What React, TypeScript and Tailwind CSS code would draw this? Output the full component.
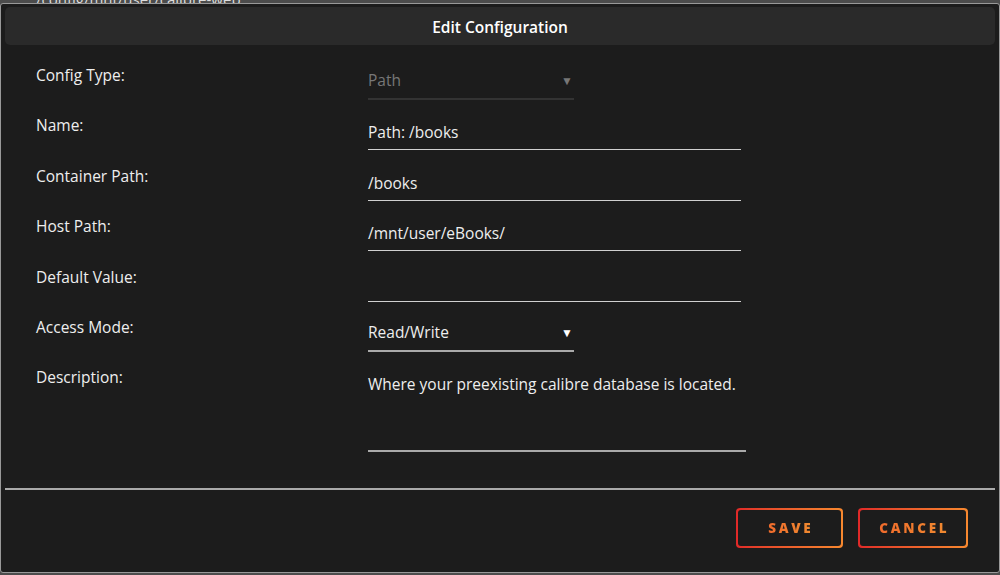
import React from 'react';

const FONT = { fontFamily: '"Open Sans", "Noto Sans", sans-serif' };

type Row = {
  label: string;
  kind: 'select' | 'text' | 'area';
  value: string;
  muted?: boolean;
};

const ROWS: Row[] = [
  { label: 'Config Type:', kind: 'select', value: 'Path', muted: true },
  { label: 'Name:', kind: 'text', value: 'Path: /books' },
  { label: 'Container Path:', kind: 'text', value: '/books' },
  { label: 'Host Path:', kind: 'text', value: '/mnt/user/eBooks/' },
  { label: 'Default Value:', kind: 'text', value: '' },
  { label: 'Access Mode:', kind: 'select', value: 'Read/Write' },
  { label: 'Description:', kind: 'area', value: 'Where your preexisting calibre database is located.' },
];

function Field({ row }: { row: Row }) {
  if (row.kind === 'select') {
    return (
      <div
        className={`w-[206px] h-[38px] pt-[8px] flex items-start justify-between border-b-2 ${
          row.muted ? 'border-[#333] text-[#777]' : 'border-[#aaa] text-[#eee]'
        }`}
      >
        <span className="text-[15.5px] leading-[21px]">{row.value}</span>
        <span className={`text-[12px] leading-[21px] mr-[1px] ${row.muted ? 'text-[#777]' : 'text-white'}`}>▼</span>
      </div>
    );
  }
  if (row.kind === 'area') {
    return (
      <div className="w-[378px] h-[88px] pt-[8px] border-b-2 border-[#aaa]">
        <span className="text-[15.5px] leading-[21px] text-[#eee]">{row.value}</span>
      </div>
    );
  }
  return (
    <div className="w-[373px] h-[38px] pt-[8px] border-b border-[#d0d0d0]">
      <span className="text-[15.5px] leading-[21px] text-[#eee]">{row.value}</span>
    </div>
  );
}

function GradientButton({ label, width }: { label: string; width: string }) {
  return (
    <div className={`${width} h-[40px] rounded-[4px] p-[2px] bg-gradient-to-r from-[#e02828] to-[#f7882f]`}>
      <div className="w-full h-full rounded-[3px] bg-[#1c1c1c] flex items-center justify-center">
        <span className="text-[13.5px] font-extrabold tracking-[0.2em] pl-[0.2em] bg-gradient-to-r from-[#f06a2c] to-[#f08a30] bg-clip-text text-transparent">
          {label}
        </span>
      </div>
    </div>
  );
}

export default function App() {
  return (
    <div className="w-[1000px] h-[575px] bg-[#4c4c4c] overflow-hidden" style={FONT}>
      <div className="h-[3px] overflow-hidden">
        <div className="-mt-[12px] pl-[36px] text-[15px] text-[#ddd]">/config/mnt/user/calibre-web</div>
      </div>
      <div className="h-[570px] bg-[#1c1c1c] border border-[#999] rounded-[3px] flex flex-col">
        <div className="mx-[4px] mt-[3px] h-[38px] pt-[3px] rounded-[5px] bg-[#2a2a2a] flex items-center justify-center">
          <span className="text-[15.5px] font-semibold text-white">Edit Configuration</span>
        </div>

        <div className="flex flex-col pl-[35px] pt-[17px] gap-[12.4px]">
          {ROWS.map((row) => (
            <div key={row.label} className="flex">
              <div className="w-[332px] text-[15.5px] text-[#eee] leading-[26px]">{row.label}</div>
              <Field row={row} />
            </div>
          ))}
        </div>

        <div className="mx-[4px] mt-[36px] h-[2px] bg-[#aaa]" />

        <div className="flex justify-end gap-[15px] pr-[31px] pt-[18px]">
          <GradientButton label="SAVE" width="w-[107px]" />
          <GradientButton label="CANCEL" width="w-[110px]" />
        </div>
      </div>
    </div>
  );
}
